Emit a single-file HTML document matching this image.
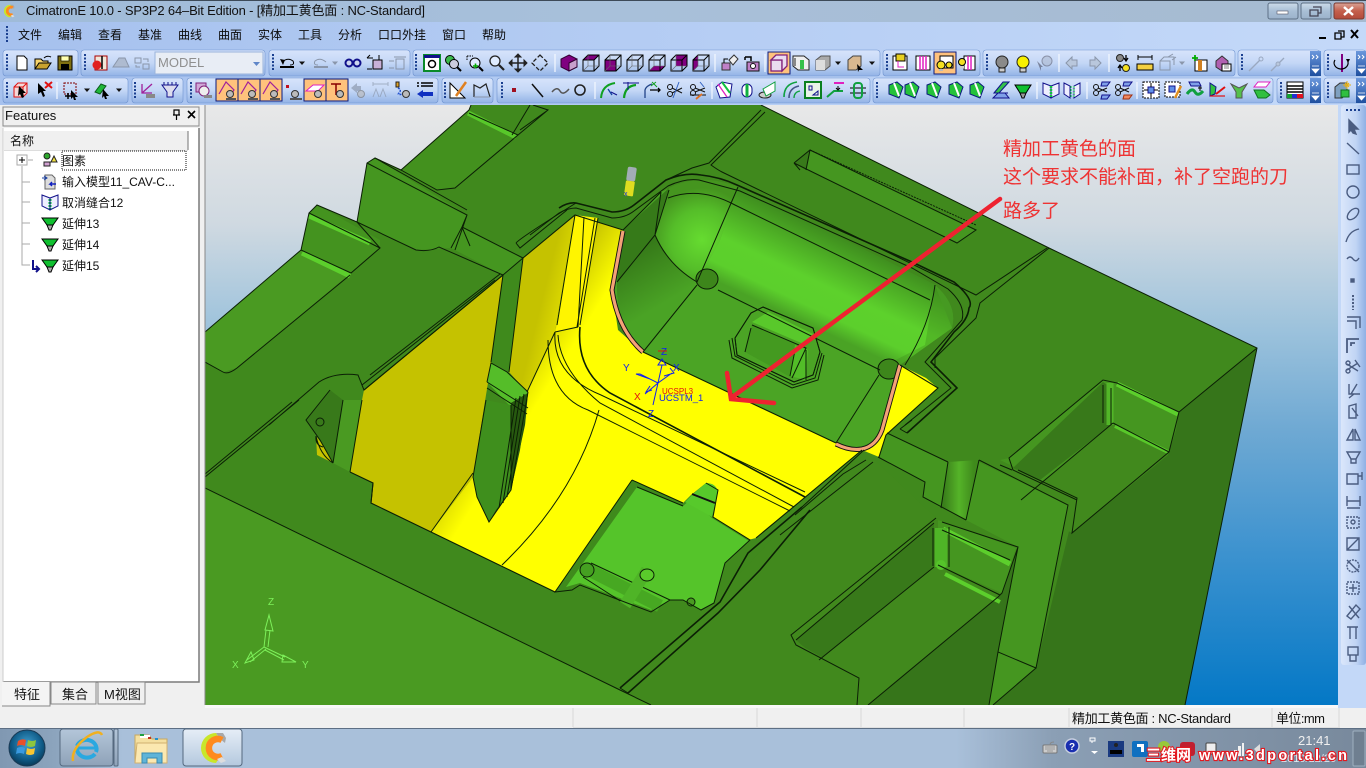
<!DOCTYPE html>
<html lang="zh"><head><meta charset="utf-8"><title>CimatronE 10.0</title>
<style>
html,body{margin:0;padding:0;width:1366px;height:768px;overflow:hidden;background:#f0f0f0}
svg{display:block;position:absolute;left:0;top:0}
text{font-family:"Liberation Sans","Noto Sans CJK SC",sans-serif}
.l{fill:none;stroke:#0b1f05;stroke-width:1}
.t{fill:none;stroke:#0b1f05;stroke-width:1.6}
.w{fill:none;stroke:#000;stroke-width:1}
.rt{fill:none;stroke:#4a5c80;stroke-width:1.4}
</style></head><body>
<svg width="1366" height="768" viewBox="0 0 1366 768" xmlns="http://www.w3.org/2000/svg">
<defs>
<linearGradient id="bg" x1="0" y1="0" x2="0" y2="1"><stop offset="0" stop-color="#e8e8e8"/><stop offset=".2" stop-color="#cfd9e1"/><stop offset=".375" stop-color="#9cc2dc"/><stop offset=".54" stop-color="#6fa9d3"/><stop offset=".75" stop-color="#3c92cf"/><stop offset="1" stop-color="#0478c6"/></linearGradient>
<linearGradient id="title" x1="0" y1="0" x2="1" y2="0"><stop offset="0" stop-color="#9fbbd9"/><stop offset=".45" stop-color="#a8c0da"/><stop offset="1" stop-color="#a6bad0"/></linearGradient>
<linearGradient id="band" x1="0" y1="0" x2="1" y2="0"><stop offset="0" stop-color="#a6c1ee"/><stop offset="1" stop-color="#c4d9f9"/></linearGradient>
<linearGradient id="tb" x1="0" y1="0" x2="0" y2="1"><stop offset="0" stop-color="#d7e4fb"/><stop offset=".5" stop-color="#c4d7f6"/><stop offset="1" stop-color="#93b3e6"/></linearGradient>
<linearGradient id="chev" x1="0" y1="0" x2="0" y2="1"><stop offset="0" stop-color="#6b97dc"/><stop offset="1" stop-color="#1e4f9f"/></linearGradient>
<linearGradient id="rb" x1="0" y1="0" x2="1" y2="0"><stop offset="0" stop-color="#dbe7fb"/><stop offset=".6" stop-color="#c0d4f4"/><stop offset="1" stop-color="#8fb0e4"/></linearGradient>
<linearGradient id="task" x1="0" y1="0" x2="1" y2="0"><stop offset="0" stop-color="#8098b2"/><stop offset=".04" stop-color="#8ca4bd"/><stop offset=".09" stop-color="#a9c0da"/><stop offset=".7" stop-color="#a9c0da"/><stop offset=".77" stop-color="#8b9fb5"/><stop offset="1" stop-color="#78899c"/></linearGradient>
<linearGradient id="btn" x1="0" y1="0" x2="0" y2="1"><stop offset="0" stop-color="#e6eef7"/><stop offset="1" stop-color="#b4c8de"/></linearGradient>
<linearGradient id="cap" x1="0" y1="0" x2="0" y2="1"><stop offset="0" stop-color="#cddbe9"/><stop offset=".5" stop-color="#a9bfd6"/><stop offset="1" stop-color="#9bb2cb"/></linearGradient>
<linearGradient id="btnr" x1="0" y1="0" x2="0" y2="1"><stop offset="0" stop-color="#d9a497"/><stop offset=".5" stop-color="#c45f4c"/><stop offset="1" stop-color="#b34a3a"/></linearGradient>
<linearGradient id="tbtn" x1="0" y1="0" x2="0" y2="1"><stop offset="0" stop-color="#b4c6d9"/><stop offset="1" stop-color="#8ea2b8"/></linearGradient>
<linearGradient id="ybrt" gradientUnits="userSpaceOnUse" x1="440" y1="470" x2="480" y2="495"><stop offset="0" stop-color="#c5c200"/><stop offset="1" stop-color="#ffff00"/></linearGradient>
<linearGradient id="ydk" gradientUnits="userSpaceOnUse" x1="542" y1="300" x2="566" y2="306"><stop offset="0" stop-color="#c5c200"/><stop offset="1" stop-color="#e0dd00"/></linearGradient>
<linearGradient id="bandg" gradientUnits="userSpaceOnUse" x1="775" y1="205" x2="735" y2="290"><stop offset="0" stop-color="#3e8c1e"/><stop offset=".55" stop-color="#5dd12c"/><stop offset=".82" stop-color="#5ccf2c"/><stop offset="1" stop-color="#4aa325"/></linearGradient>
<radialGradient id="spot" gradientUnits="userSpaceOnUse" cx="702" cy="240" r="52"><stop offset="0" stop-color="#66dc30"/><stop offset=".6" stop-color="#55bd29"/><stop offset="1" stop-color="#45951f"/></radialGradient>
<linearGradient id="wallg" gradientUnits="userSpaceOnUse" x1="640" y1="250" x2="670" y2="300"><stop offset="0" stop-color="#367a19"/><stop offset="1" stop-color="#4aa325"/></linearGradient>
<linearGradient id="cyl" gradientUnits="userSpaceOnUse" x1="944" y1="0" x2="974" y2="0"><stop offset="0" stop-color="#3a7f1b"/><stop offset=".5" stop-color="#55b328"/><stop offset="1" stop-color="#3f8a1c"/></linearGradient>
<radialGradient id="orb" cx=".5" cy=".4" r=".6"><stop offset="0" stop-color="#3f9fd0"/><stop offset=".7" stop-color="#0f5a86"/><stop offset="1" stop-color="#0a3a58"/></radialGradient>
<clipPath id="vp"><rect x="205" y="105" width="1133" height="600"/></clipPath>

<!-- toolbar parts -->
<g id="grip" fill="#1a3f8f"><rect x="-1" y="-8" width="2" height="2"/><rect x="-1" y="-4.5" width="2" height="2"/><rect x="-1" y="-1" width="2" height="2"/><rect x="-1" y="2.500" width="2" height="2"/><rect x="-1" y="6" width="2" height="2"/></g>
<path id="dd" d="M-3,-1.500H3L0,2Z" fill="#111"/>
<path id="ddg" d="M-3,-1.500H3L0,2Z" fill="#8a96aa"/>
<rect id="sel" x="-11" y="-11" width="22" height="22" fill="#ffc27c" stroke="#0a1a7e"/>
<g id="wc" fill="none" stroke="#000"><path d="M-8,-3H3V8H-8ZM-8,-3L-3,-8H8V3L3,8M3,-3L8,-8"/><path d="M-8,8L-3,3V-8M-3,3H8" stroke="#666" stroke-width=".6"/></g>
<g id="bulb" stroke="#222"><circle cy="-2" r="6"/><rect x="-3" y="4" width="6" height="4" fill="#ccc"/></g>
<g id="gface"><path d="M-8,-5L0,-8L6,-3L2,8L-8,4Z" fill="#25c23a" stroke="#0a1a7e"/><path d="M-3,-7L2,6" stroke="#fff" stroke-width="2"/></g>
<g id="chv"><rect x="-5" y="-12" width="11" height="25" fill="url(#chev)"/><path d="M-3,-8l2,2l-2,2M1,-8l2,2l-2,2" stroke="#fff" fill="none"/><path d="M-3,3h7M-3,6h7l-3.500,4z" fill="#fff" stroke="#fff" stroke-width=".8"/></g>
<g id="slab"><path d="M-8,4L-1,-8L7,0L3,6" fill="none" stroke="#a0209a" stroke-width="1.200"/><circle cx="3" cy="4" r="3.500" fill="#bbb" stroke="#333"/><path d="M-1,9H9" stroke="#555" stroke-width="2"/></g>
<g id="clogo"><path d="M3,-15A15,15 0 1 0 3,15L6,10A10,10 0 0 1 6,-10Z" fill="#c9e62a"/><path d="M3,-15L10,-15L13,-10L12,-5L7,-9Z" fill="#a8a8a8"/><path d="M9,-8A9,9 0 1 0 9,8" fill="none" stroke="#ff8a1e" stroke-width="6.500"/><path d="M4,11L9,9L13,13L8,15Z" fill="#ddd"/></g>
</defs>

<!-- window chrome -->
<rect width="1366" height="768" fill="#f0f0f0"/>
<rect width="1366" height="22" fill="url(#title)"/>
<rect width="1366" height="1" fill="#3d4a58"/>
<rect y="22" width="1366" height="83" fill="url(#band)"/>
<rect x="1338" y="105" width="28" height="603" fill="#c3d8f8"/>
<use href="#clogo" transform="translate(9,11) scale(.42)"/>
<text x="26" y="15" font-size="13" fill="#111" textLength="399" lengthAdjust="spacing">CimatronE 10.0 - SP3P2 64–Bit Edition - [精加工黄色面 : NC-Standard]</text>
<!-- caption buttons -->
<rect x="1268" y="3" width="30" height="16" rx="2" fill="url(#cap)" stroke="#5d7086"/><rect x="1277" y="11" width="11" height="3" fill="#fff" stroke="#556"  stroke-width=".6"/>
<rect x="1301" y="3" width="30" height="16" rx="2" fill="url(#cap)" stroke="#5d7086"/><path d="M1313,7h8v6h-3M1310,10h8v6h-8z" fill="none" stroke="#445" stroke-width="1.300"/>
<rect x="1334" y="3" width="30" height="16" rx="2" fill="url(#btnr)" stroke="#7a3a30"/><path d="M1344,7l9,8M1353,7l-9,8" stroke="#fff" stroke-width="2.500"/>
<!-- MDI -->
<rect x="1319" y="37" width="7" height="2" fill="#000"/><path d="M1338,31h6v6h-3M1335,33h6v6h-6z" fill="none" stroke="#000" stroke-width="1.300"/><path d="M1351,30l7,8M1358,30l-7,8" stroke="#000" stroke-width="2"/>
<!-- menu -->
<use href="#grip" x="7" y="34"/>
<g font-size="12" fill="#0a0a0a">
<text x="18" y="39">文件</text><text x="58" y="39">编辑</text><text x="98" y="39">查看</text><text x="138" y="39">基准</text><text x="178" y="39">曲线</text><text x="218" y="39">曲面</text><text x="258" y="39">实体</text><text x="298" y="39">工具</text><text x="338" y="39">分析</text><text x="378" y="39">口口外挂</text><text x="442" y="39">窗口</text><text x="482" y="39">帮助</text>
</g>
<!-- toolbar bands row 1 -->
<g fill="url(#tb)" stroke="#6f93cf" stroke-width=".6">
<rect x="3" y="50" width="75" height="26" rx="3"/><rect x="81" y="50" width="184" height="26" rx="3"/><rect x="269" y="50" width="141" height="26" rx="3"/><rect x="413" y="50" width="467" height="26" rx="3"/><rect x="883" y="50" width="97" height="26" rx="3"/><rect x="983" y="50" width="252" height="26" rx="3"/><rect x="1238" y="50" width="82" height="26" rx="3"/><rect x="1324" y="50" width="42" height="26" rx="3"/>
<!-- row 2 -->
<rect x="3" y="78" width="125" height="25" rx="3"/><rect x="132" y="78" width="51" height="25" rx="3"/><rect x="187" y="78" width="251" height="25" rx="3"/><rect x="442" y="78" width="51" height="25" rx="3"/><rect x="497" y="78" width="373" height="25" rx="3"/><rect x="873" y="78" width="400" height="25" rx="3"/><rect x="1277" y="78" width="43" height="25" rx="3"/><rect x="1324" y="78" width="42" height="25" rx="3"/>
</g>
<g>
<use href="#grip" x="7" y="62"/><use href="#grip" x="85" y="62"/><use href="#grip" x="273" y="62"/><use href="#grip" x="416" y="62"/><use href="#grip" x="887" y="62"/><use href="#grip" x="987" y="62"/><use href="#grip" x="1242" y="62"/><use href="#grip" x="1328" y="62"/>
<use href="#grip" x="7" y="90"/><use href="#grip" x="135" y="90"/><use href="#grip" x="191" y="90"/><use href="#grip" x="445" y="90"/><use href="#grip" x="502" y="90"/><use href="#grip" x="877" y="90"/><use href="#grip" x="1281" y="90"/><use href="#grip" x="1328" y="90"/>
<use href="#chv" x="1315" y="63"/><use href="#chv" x="1361" y="63"/><use href="#chv" x="1315" y="90"/><use href="#chv" x="1361" y="90"/>
</g>
<!-- separators -->
<path d="M555,54V72M715,54V72M765,54V72M1059,54V72M1109,54V72M57,82V99M595,82V99M712,82V99M1037,82V99M1087,82V99M1137,82V99" stroke="#f4f8ff" stroke-width="1.200"/>

<!-- ROW 1 ICONS -->
<g transform="translate(22,63)"><path d="M-5,-7H2L5,-4V7H-5Z" fill="#fff" stroke="#000"/></g>
<g transform="translate(43,63)"><path d="M-8,6V-4H-2L0,-2H5V1" fill="#f7d46b" stroke="#000"/><path d="M-8,6L-4,0H8L4,6Z" fill="#c9a22f" stroke="#000"/><path d="M1,-5Q4,-8 8,-6" stroke="#000" fill="none"/></g>
<g transform="translate(65,63)"><rect x="-7" y="-7" width="14" height="14" fill="#807010" stroke="#000"/><rect x="-4" y="-7" width="8" height="5" fill="#ffffb0" stroke="#000" stroke-width=".6"/><rect x="-4" y="1" width="8" height="6" fill="#000"/></g>
<g transform="translate(100,63)"><rect x="-5" y="-7" width="12" height="14" fill="#f2e6d8" stroke="#a00" /><circle cx="-3" cy="2" r="4.500" fill="#e02020"/><path d="M2,-7V6" stroke="#000" stroke-width="1.500"/></g>
<g transform="translate(121,63)"><path d="M-8,4L-2,-5H4L8,4Z" fill="#aebbd0" stroke="#8a96aa"/></g>
<g transform="translate(142,63)" fill="none" stroke="#8a96aa"><rect x="-7" y="-5" width="6" height="5"/><rect x="1" y="1" width="6" height="5"/><path d="M1,-4H6V-1M-2,4H-6V2"/></g>
<rect x="155" y="52" width="108" height="22" fill="#e8edf5" stroke="#9ab4dc"/><text x="158" y="67" font-size="13" fill="#8f8f8f">MODEL</text><path d="M253,62h7l-3.500,4z" fill="#5f86c8"/>
<g transform="translate(288,63)"><path d="M-8,4H6" stroke="#000" stroke-width="2"/><path d="M-6,-1Q0,-6 5,-2Q7,2 2,2" fill="none" stroke="#000"/><path d="M-8,-4L-5,2L-3,-3Z" fill="#000"/></g><use href="#dd" x="302" y="63"/>
<g transform="translate(320,63)"><path d="M-6,4H8" stroke="#8a96aa" stroke-width="2"/><path d="M6,-1Q0,-6 -5,-2Q-7,2 -2,2" fill="none" stroke="#8a96aa"/></g><use href="#ddg" x="335" y="63"/>
<g transform="translate(353,63)" stroke="#10108a" fill="#cdd6ee"><circle cx="-4" r="3.500" stroke-width="2"/><circle cx="4" r="3.500" stroke-width="2"/></g>
<g transform="translate(375,63)"><path d="M-8,-5H-2M-8,-5L-5,-8M4,-8V-3M1,-3H7" stroke="#000" fill="none"/><rect x="-2" y="-3" width="9" height="9" fill="#c8b0d8" stroke="#000"/><path d="M-8,6H-3" stroke="#000"/></g>
<g transform="translate(397,63)" stroke="#8a96aa" fill="none"><rect x="-1" y="-4" width="8" height="10"/><path d="M-3,-6H9M-8,-2H-3M-8,5H-3"/></g>
<g transform="translate(432,63)"><rect x="-8" y="-8" width="16" height="16" fill="#fff" stroke="#0a8a2a" stroke-width="2"/><rect x="-8" y="-8" width="16" height="3" fill="#10108a"/><circle cy="1" r="3.500" fill="none" stroke="#000" stroke-width="1.500"/></g>
<g transform="translate(453,63)"><circle cx="-3" cy="-3" r="4.500" fill="#3aba4a" stroke="#000"/><circle cx="1" cy="1" r="4.500" fill="#ccd" stroke="#000"/><path d="M4,4L8,8" stroke="#000" stroke-width="2"/></g>
<g transform="translate(475,63)"><circle cx="0" cy="0" r="5" fill="#e0ecff" stroke="#000"/><path d="M4,4L8,8" stroke="#000" stroke-width="2"/><path d="M-8,-7H-2M-8,-7V-2" stroke="#000" stroke-dasharray="1.500 1" fill="none"/><path d="M-2,3h5M.5,.5v5" stroke="#0a0" stroke-width="1.600"/></g>
<g transform="translate(497,63)"><circle cx="-2" cy="-2" r="5" fill="#e0ecff" stroke="#222" stroke-width="1.300"/><path d="M2,2L7,7" stroke="#222" stroke-width="2.200"/></g>
<g transform="translate(518,63)" stroke="#222" fill="#222"><path d="M0,-8V8M-8,0H8" stroke-width="1.500"/><path d="M0,-9l-3,3h6zM0,9l-3,-3h6zM-9,0l3,-3v6zM9,0l-3,-3v6z"/></g>
<g transform="translate(540,63)" stroke="#222" fill="none"><path d="M0,-8l4,4l4,4l-4,4l-4,4l-4,-4l-4,-4l4,-4z" stroke-width="1.300" stroke-dasharray="4 2"/></g>
<g transform="translate(569,63)"><path d="M0,-8L8,-4V4L0,8L-8,4V-4Z" fill="#800080" stroke="#300030"/><path d="M0,0L8,-4V4L0,8Z" fill="#c8a0cc" stroke="#300030"/></g>
<g transform="translate(591,63)"><path d="M-8,-3L-3,-8H8L3,-3Z" fill="#800080"/><use href="#wc"/></g>
<g transform="translate(613,63)"><rect x="-8" y="-3" width="11" height="11" fill="#800080"/><use href="#wc"/></g>
<g transform="translate(635,63)"><use href="#wc"/></g>
<g transform="translate(657,63)"><path d="M-8,8L-3,3H8L3,8Z" fill="#800080"/><use href="#wc"/></g>
<g transform="translate(679,63)"><path d="M-3,-8H8V3H-3Z" fill="#800080"/><use href="#wc"/></g>
<g transform="translate(701,63)"><path d="M-8,-3L-3,-8V3L-8,8Z" fill="#800080"/><use href="#wc"/></g>
<g transform="translate(729,63)"><rect x="-7" y="0" width="8" height="7" fill="#c080c8" stroke="#333"/><path d="M0,-3L5,-8L9,-4L4,2Z" fill="#eee" stroke="#333"/><path d="M-5,0V-4H-1" fill="none" stroke="#000"/></g>
<g transform="translate(752,63)"><rect x="-5" y="-1" width="12" height="9" fill="#c080c8" stroke="#111"/><circle cx="1" cy="3" r="2.500" fill="#fff" stroke="#111"/><path d="M-7,-6H-1V-2M-7,-6V-3" fill="none" stroke="#000" stroke-width="1.500"/></g>
<use href="#sel" x="779" y="63"/><g transform="translate(779,63)"><rect x="-8" y="-3" width="11" height="11" fill="#eadcf0" stroke="#80207a" stroke-width="1.300"/><path d="M-8,-3L-3,-8H8V3L3,8V-3Z" fill="#eadcf0" stroke="#80207a" stroke-width="1.300"/></g>
<g transform="translate(801,63)"><path d="M-8,-7H3L8,-3V7H-3L-8,3Z" fill="#eee" stroke="#222"/><path d="M-1,-3h4V6h-4z" fill="#35c04a"/><path d="M-6,-5V3" stroke="#222"/></g>
<g transform="translate(823,63)"><path d="M-7,-3L-2,-7H7V3L2,7H-7Z" fill="#aaa" stroke="#555"/><rect x="-7" y="-3" width="9" height="10" fill="#ddd"/></g><use href="#dd" x="838" y="63"/>
<g transform="translate(855,63)"><path d="M-7,-3L-2,-7H6V3L1,7H-7Z" fill="#d8b890" stroke="#444"/><path d="M2,1L8,7L4,7L3,9Z" fill="#000"/></g><use href="#dd" x="872" y="63"/>
<g transform="translate(901,63)"><rect x="-8" y="-7" width="14" height="14" fill="#fff" stroke="#000"/><rect x="-5" y="-9" width="9" height="7" fill="#e8d020" stroke="#000"/><path d="M-3,-2V4H3" stroke="#e020c0" fill="none"/></g>
<g transform="translate(923,63)"><rect x="-7" y="-7" width="14" height="14" fill="#fff" stroke="#000"/><path d="M-3,-7V7M0,-7V7M3,-7V7" stroke="#e020c0" stroke-width="1.500"/></g>
<use href="#sel" x="945" y="63"/><g transform="translate(945,63)"><rect x="-5" y="-7" width="13" height="12" fill="#fff" stroke="#000"/><circle cx="-4" cy="2" r="4" fill="#f4e020" stroke="#000"/><rect x="-6" y="6" width="4" height="2" fill="#bbb"/><circle cx="4" cy="2" r="3" fill="#f4e020" stroke="#000"/></g>
<g transform="translate(967,63)"><rect x="-3" y="-7" width="11" height="14" fill="#fff" stroke="#000"/><path d="M1,-7V7M4,-7V7" stroke="#e020c0" stroke-width="1.500"/><circle cx="-5" cy="-1" r="3.500" fill="#f4e020" stroke="#000"/><rect x="-7" y="3" width="4" height="2.500" fill="#ccc"/></g>
<use href="#bulb" x="1002" y="64" fill="#8a8a8a"/><use href="#bulb" x="1023" y="64" fill="#f8f000"/>
<g transform="translate(1045,64)" opacity=".55"><circle cx="2" cy="-3" r="5" fill="#aab6cc" stroke="#556"/><path d="M-8,-3L-2,3L-4,3L-4,7Z" fill="#445"/></g>
<path d="M1066,63l6,-6v3h5v6h-5v3zM1101,63l-6,-6v3h-5v6h5v3z" fill="#b9c7dc" stroke="#8a96aa"/>
<g transform="translate(1123,63)"><circle cx="-3" cy="-5" r="3.500" fill="#888" stroke="#222"/><circle cx="3" cy="5" r="3.500" fill="#f4e020" stroke="#222"/><path d="M3,-8v5m-2,-2l2,3l2,-3M-3,8v-5m-2,2l2,-3l2,3" stroke="#000" fill="none" stroke-width="1.300"/></g>
<g transform="translate(1145,63)"><path d="M-7,-6H7M-7,-8V-3M7,-8V-3" stroke="#000" fill="none"/><path d="M-4,-6l-3,0M4,-6l3,0" stroke="#000"/><rect x="-8" y="1" width="16" height="6" fill="#f4d040" stroke="#000"/></g>
<g transform="translate(1167,63)" stroke="#8a96aa" fill="none"><rect x="-7" y="-2" width="10" height="9"/><path d="M-7,-2l4,-4h10v8M1,-6l5,-3M5,-3l4,-3"/></g><use href="#ddg" x="1182" y="63"/>
<g transform="translate(1199,63)"><rect x="-4" y="-3" width="12" height="11" fill="#fff" stroke="#000"/><rect x="-1" y="-3" width="4" height="11" fill="#d08020"/><path d="M-7,-5h6M-4,-8v6" stroke="#0a0" stroke-width="1.800"/></g>
<g transform="translate(1222,63)"><path d="M-6,-2L0,-7L6,-2V4L0,8L-6,4Z" fill="#b060b0" stroke="#333"/><rect x="0" y="1" width="9" height="7" fill="#fff" stroke="#000"/><path d="M2,3h5M2,5h5" stroke="#000" stroke-width=".6"/></g>
<path d="M1249,71L1260,60" stroke="#9aa8c0" stroke-width="1.300"/><circle cx="1261" cy="59" r="2" fill="none" stroke="#9aa8c0"/><path d="M1271,71L1284,58" stroke="#9aa8c0" stroke-width="1.300"/><circle cx="1278" cy="64" r="2" fill="#b9c7dc" stroke="#9aa8c0"/>
<g transform="translate(1342,63)"><path d="M0,-9V9" stroke="#800080" stroke-width="2"/><path d="M-7,-3A7,6 0 1 0 6,-1" fill="none" stroke="#000" stroke-width="1.200"/><path d="M4,-4l4,0l-2,4z" fill="#000"/></g>

<!-- ROW 2 ICONS -->
<g transform="translate(21,90)"><path d="M-7,-3L-3,-7H6V3L2,7H-7Z" fill="#f4d8d8" stroke="#e01010"/><path d="M-7,-3H2V7M2,-3L6,-7" stroke="#e01010" fill="none"/><path d="M-2,-4L5,3H2L3,7L1,8L-1,4L-3,6Z" fill="#000"/></g>
<g transform="translate(44,90)"><path d="M-6,-7L2,1H-1L1,6L-1,7L-3,2L-6,4Z" fill="#000"/><path d="M1,-8L8,-2M8,-8L1,-2" stroke="#e01010" stroke-width="2"/></g>
<g transform="translate(72,90)"><rect x="-8" y="-7" width="12" height="11" fill="none" stroke="#800000" stroke-dasharray="2 1"/><path d="M-1,0L6,7H3L4,10L2,10L1,7L-1,9Z" fill="#000"/><path d="M-7,6h6M-4,3v6" stroke="#000" stroke-width="1.500"/></g><use href="#dd" x="87" y="90"/>
<g transform="translate(103,90)"><path d="M-8,2L-2,-6L3,-4L-3,4Z" fill="#1fb83a" stroke="#0a5a1a"/><path d="M0,-1L6,6H3L4,9L2,9L1,6L-1,8Z" fill="#000"/></g><use href="#dd" x="119" y="90"/>
<g transform="translate(148,90)"><path d="M-6,-6V3H4M-6,3L4,-6" stroke="#a0209a" fill="none" stroke-width="1.300"/><rect x="-2" y="4" width="9" height="4" fill="#888"/></g>
<g transform="translate(170,90)"><path d="M-8,-5H8L3,2V7H-3V2Z" fill="#dde" stroke="#10108a"/><path d="M-6,-8V-5M-2,-8V-5M2,-8V-5M6,-8V-5" stroke="#10108a"/></g>
<g transform="translate(203,90)"><rect x="-7" y="-7" width="10" height="9" fill="#d0a8d8" stroke="#80207a"/><circle cx="1" cy="1" r="5" fill="#eee" stroke="#80207a"/><rect x="1" y="5" width="8" height="3" fill="#888"/></g>
<use href="#sel" x="227" y="90"/><use href="#slab" x="227" y="90"/>
<use href="#sel" x="249" y="90"/><use href="#slab" x="249" y="90"/>
<use href="#sel" x="271" y="90"/><use href="#slab" x="271" y="90"/>
<g transform="translate(293,90)"><rect x="-7" y="-5" width="3" height="3" fill="#c01020"/><circle cx="2" cy="4" r="3.500" fill="#bbb" stroke="#333"/><path d="M-3,9H9" stroke="#555" stroke-width="2"/></g>
<use href="#sel" x="315" y="90"/><g transform="translate(315,90)"><path d="M-9,1L-2,-5H9L3,1Z" fill="#fff" stroke="#e020c0"/><circle cx="3" cy="4" r="3.500" fill="#bbb" stroke="#333"/></g>
<use href="#sel" x="337" y="90"/><g transform="translate(337,90)"><path d="M-6,-6H4M-1,-6V5" stroke="#800" stroke-width="1.500"/><circle cx="3" cy="4" r="3.500" fill="#bbb" stroke="#333"/></g>
<g transform="translate(358,90)" opacity=".65"><path d="M-7,-2L-1,-7V-4H3V1H-1V3Z" fill="#8a96aa"/><circle cx="3" cy="4" r="3.500" fill="#bbb" stroke="#777"/></g>
<g transform="translate(381,90)" opacity=".65"><path d="M-8,-6H7M-8,-8V-4M7,-8V-4" stroke="#8a96aa"/><path d="M-8,7L-5,-1L-2,7M-1,7L2,-1L5,7" fill="none" stroke="#8a96aa"/></g>
<g transform="translate(403,90)"><path d="M-7,-8h3v5h-3z" fill="#e0a020" stroke="#222"/><path d="M-5,-2Q-1,0 -4,3T3,3" stroke="#2050d0" fill="none" stroke-width="1.500" stroke-dasharray="2 1"/><circle cx="3" cy="4" r="3.500" fill="#bbb" stroke="#333"/></g>
<g transform="translate(425,90)"><path d="M-4,-7H8M-4,-4H8M-8,-7H-6M-8,-4H-6" stroke="#000" stroke-width="1.500"/><path d="M-8,4L-2,0V2H8V6H-2V8Z" fill="#1030c0"/></g>
<g transform="translate(458,90)"><path d="M-8,8V-7L7,8Z" fill="#fff" stroke="#000"/><path d="M-2,6L8,-8" stroke="#e08020" stroke-width="2.500"/></g>
<path d="M474,97V85L480,88L486,84L490,97" fill="none" stroke="#222" stroke-width="1.200"/><path d="M474,97H490" stroke="#8a96aa"/>
<rect x="512" y="88" width="4" height="4" fill="#a01020"/>
<path d="M532,84L543,97" stroke="#111" stroke-width="1.500"/><path d="M552,92Q557,86 560,91T569,89" stroke="#555" fill="none" stroke-width="1.500"/><circle cx="580" cy="90" r="5" fill="none" stroke="#222" stroke-width="1.600"/>
<g transform="translate(609,90)"><path d="M-8,8Q-7,-5 6,-7" stroke="#10a020" fill="none" stroke-width="2"/><path d="M-1,-1L3,5" stroke="#1040a0" stroke-width="1.300"/><path d="M2,2L8,5" stroke="#10108a"/></g>
<g transform="translate(631,90)"><path d="M-7,8Q-6,-4 5,-5" stroke="#10a020" fill="none" stroke-width="2.200"/><path d="M-8,-7H8M-3,-8V0" stroke="#10108a"/></g>
<g transform="translate(653,90)"><path d="M-8,8V0Q-7,-4 -1,-6" stroke="#224488" fill="none" stroke-width="1.300"/><path d="M-3,0H7M5,-2l2,2l-2,2" stroke="#000" fill="none" stroke-width="1.300"/><path d="M-1,-8L4,-3M-2,-4L3,-8" stroke="#10a020"/></g>
<g transform="translate(675,90)" stroke="#111" fill="none"><circle cx="-5" cy="-3" r="2.500"/><circle cx="-5" cy="4" r="2.500"/><path d="M-3,-2L7,3M-3,3L7,-2"/><path d="M4,-8L-2,8" stroke="#3060c0" stroke-width="1"/></g>
<g transform="translate(698,90)" stroke="#111" fill="none"><circle cx="-5" cy="-3" r="2.500"/><circle cx="-5" cy="3" r="2.500"/><path d="M-3,-2L7,2M-3,2L7,-2M-8,5H8"/><path d="M-2,9L4,4" stroke="#e07020" stroke-width="1.800"/><path d="M2,-8L6,-3" stroke="#3060c0"/></g>
<g transform="translate(724,90)"><path d="M-8,-3L-2,-8L8,-6L6,7L-4,8Z" fill="#fff" stroke="#10108a"/><path d="M-6,-6L3,7" stroke="#e020c0" stroke-width="1.300"/><path d="M-2,-8L6,3" stroke="#10c040" stroke-width="2"/></g>
<g transform="translate(747,90)"><rect x="-5" y="-6" width="10" height="13" rx="5" fill="#fff" stroke="#10108a"/><path d="M0,-6V7" stroke="#10b040" stroke-width="3"/></g>
<g transform="translate(768,90)"><ellipse cx="-3" cy="5" rx="6" ry="3" fill="#ccc" stroke="#222"/><path d="M-5,-1L7,-8V1L-2,6Z" fill="#fff" stroke="#10a040"/></g>
<g transform="translate(792,90)" fill="none"><path d="M-8,7Q-8,-6 5,-8" stroke="#10a040" stroke-width="1.600"/><path d="M-3,8Q-3,-2 7,-4" stroke="#445588" stroke-width="1.600"/><path d="M2,8Q2,2 8,1" stroke="#10a040" stroke-width="1.300"/></g>
<g transform="translate(813,90)"><rect x="-8" y="-8" width="16" height="16" fill="#e8f4e8" stroke="#0a8020" stroke-width="2"/><rect x="-4" y="-4" width="3" height="4" fill="none" stroke="#10108a"/><path d="M0,5H5V1Z" fill="none" stroke="#10108a"/></g>
<g transform="translate(835,90)"><path d="M-1,-7H9" stroke="#e020c0" stroke-width="2"/><path d="M-8,7L-1,1H8" stroke="#10a040" stroke-width="2" fill="none"/><path d="M3,-4V-1m-2,-1l2,2l2,-2" stroke="#000" fill="none"/></g>
<g transform="translate(858,90)"><path d="M-8,-2H8M-8,3H8" stroke="#000"/><rect x="-4" y="-7" width="8" height="15" rx="3" fill="none" stroke="#10a040" stroke-width="2"/></g>
<g><use href="#gface" x="897" y="90"/><use href="#gface" x="913" y="90"/><use href="#gface" x="935" y="90"/><use href="#gface" x="957" y="90"/><use href="#gface" x="978" y="90"/></g>
<g transform="translate(1001,90)"><path d="M-7,3L2,-8H8L-2,3ZM-7,3H7" stroke="#10108a" fill="#35c04a"/><path d="M-8,8H8L4,3H-3Z" fill="#7fa0e8" stroke="#10108a"/></g>
<g transform="translate(1023,90)"><path d="M-8,-5H8L3,3H-3Z" fill="#10c030" stroke="#000"/><path d="M-3,3H3L1,8H-1Z" fill="#999" stroke="#000"/></g>
<g transform="translate(1051,90)"><path d="M-8,-7L0,-4V8L-8,4ZM8,-7L0,-4V8L8,4Z" fill="#eef" stroke="#10108a"/><path d="M0,-4V8" stroke="#10c040" stroke-width="2.500" stroke-dasharray="2 1"/></g>
<g transform="translate(1072,90)"><path d="M-8,-7L-2,-4V8L-8,4ZM8,-7L2,-4V8L8,4Z" fill="#eef" stroke="#10108a"/><path d="M-1,-4V8M2,-4V8" stroke="#10c040" stroke-dasharray="2 1"/></g>
<g transform="translate(1101,90)" stroke="#111" fill="none"><circle cx="-5" cy="-3" r="2.500"/><circle cx="-5" cy="3" r="2.500"/><path d="M-3,-2L6,2M-3,2L6,-2"/><path d="M1,-8H9L6,-4H0ZM1,5H9L6,9H0Z" fill="#7fa0e8" stroke="#10108a"/></g>
<g transform="translate(1123,90)" stroke="#111" fill="none"><circle cx="-5" cy="-3" r="2.500"/><circle cx="-5" cy="3" r="2.500"/><path d="M-3,-2L6,2M-3,2L6,-2"/><path d="M1,-8H9L6,-4H0Z" fill="#7fa0e8" stroke="#10108a"/><path d="M1,5H9L6,9H0Z" fill="#f08860" stroke="#a03010"/></g>
<g transform="translate(1151,90)"><rect x="-8" y="-8" width="16" height="16" fill="#fff" stroke="#000" stroke-dasharray="2 1"/><rect x="-3" y="-3" width="6" height="6" fill="#6090e8" stroke="#10108a"/><path d="M0,-7V-3M0,3V7M-7,0H-3M3,0H7" stroke="#000"/></g>
<g transform="translate(1173,90)"><rect x="-8" y="-8" width="15" height="15" fill="#fff" stroke="#000" stroke-dasharray="2 1"/><rect x="-4" y="-4" width="6" height="6" fill="#6090e8" stroke="#10108a"/><path d="M2,8L8,-4" stroke="#e09020" stroke-width="2.500"/></g>
<g transform="translate(1195,90)"><path d="M-6,-8H4L6,-4H-4Z" fill="#7fa0e8" stroke="#10108a"/><path d="M-8,4Q-3,-3 0,2T8,1" stroke="#10a040" fill="none" stroke-width="3"/><path d="M5,-4v5M3,-2h4" stroke="#000"/></g>
<g transform="translate(1217,90)"><path d="M-7,-7L-1,-3L-2,4L-7,6Z" fill="#30c040" stroke="#10108a"/><path d="M-1,4L8,-3" stroke="#e01010" stroke-width="2"/><path d="M-7,6L8,6" stroke="#e01010" stroke-width="1.200"/></g>
<g transform="translate(1239,90)"><path d="M-8,-6L0,-2L8,-6L3,2L3,8H-3V2Z" fill="#55c04a" stroke="#555"/></g>
<g transform="translate(1262,90)"><path d="M-4,-8H8L4,-3H-8Z" fill="#fff" stroke="#e020c0"/><path d="M-8,0H2L8,5L4,8H-4Z" fill="#30c040" stroke="#107020"/></g>
<g transform="translate(1295,90)"><rect x="-8" y="-8" width="16" height="16" fill="#fff" stroke="#000"/><path d="M-8,-4H8M-8,-1H8M-8,2H8" stroke="#000" stroke-width="1.500"/><rect x="-8" y="4" width="5" height="4" fill="#10a030"/><rect x="-3" y="4" width="5" height="4" fill="#2030d0"/><rect x="2" y="4" width="6" height="4" fill="#e01020"/></g>
<g transform="translate(1342,90)"><path d="M-7,-3L-2,-7H5V4L0,8H-7Z" fill="#7fa0c0" stroke="#333"/><rect x="-1" y="0" width="8" height="7" fill="#30c040" stroke="#107020"/><path d="M3,-7l4,4M7,-7l-4,4M1,-5h8M5,-9v8" stroke="#e8b010"/></g>

<!-- right toolbar -->
<rect x="1341" y="105" width="25" height="560" rx="3" fill="url(#rb)"/>
<path d="M1346,110h2M1350,110h2M1354,110h2M1358,110h2" stroke="#1a3f8f" stroke-width="2"/>
<g class="rt">
<path d="M1349,120L1358,129H1354L1356,134L1353,133L1351,130L1349,132Z" fill="#4a5c80"/>
<path d="M1347,143L1359,154"/>
<rect x="1347" y="165" width="12" height="9"/>
<circle cx="1353" cy="192" r="6"/>
<ellipse cx="1353" cy="214" rx="7" ry="4" transform="rotate(-45 1353 214)"/>
<path d="M1346,242Q1349,231 1359,229"/>
<path d="M1347,259Q1350,255 1353,259T1359,258"/>
<rect x="1351" y="279" width="3" height="3" fill="#4a5c80"/>
<path d="M1353,295V310" stroke-dasharray="2 1.500" stroke-width="2"/>
<path d="M1347,317H1360V328M1347,321H1356V329"/>
<path d="M1347,353V339H1359M1351,346V343H1355" stroke-width="1.800"/>
<path d="M1347,364L1358,371M1347,370L1358,363M1355,360L1360,367"/><circle cx="1348" cy="363" r="2"/><circle cx="1348" cy="371" r="2"/>
<path d="M1349,384V394H1360M1357,384L1351,394M1349,398L1354,394"/>
<path d="M1349,418V406L1356,404V418ZM1352,408L1358,416" /><path d="M1353,429L1347,440H1353ZM1355,429L1360,440H1355Z"/>
<path d="M1347,452H1360L1356,459H1351ZM1351,459V463H1356V459"/>
<path d="M1347,474H1358V484H1347ZM1358,476H1362M1362,472V480"/>
<path d="M1347,496V506M1360,496V506M1347,501H1360M1347,508H1360"/>
<rect x="1347" y="517" width="12" height="11" stroke-dasharray="2 1"/><circle cx="1353" cy="522" r="2" />
<path d="M1347,538H1359V550H1347ZM1347,550L1359,538"/><circle cx="1353" cy="566" r="6" stroke-dasharray="2 1"/><path d="M1347,560L1359,572"/>
<rect x="1347" y="582" width="12" height="12" stroke-dasharray="2 1"/><path d="M1353,584V592M1349,588H1357"/>
<path d="M1347,616L1356,605L1360,609L1351,619ZM1349,606L1359,618"/>
<path d="M1347,627H1358M1350,627V639M1356,627V639"/>
<rect x="1348" y="647" width="10" height="8"/><path d="M1350,655V661H1356V655"/>
</g>

<!-- VIEWPORT -->
<g clip-path="url(#vp)">
<rect x="205" y="105" width="1133" height="600" fill="url(#bg)"/>
<polygon points="205,332 301,250 309,213 317,205 357,222 367,163 375,158 401,170 469,110 471,105 761,105 1049,248 1257,348 1185,705 205,705" fill="#40891d"/>
<!-- dark right side -->
<polygon points="1257,348 1185,705 990,705 1036,668 1077,498 1072,533 1168,455 1176,430 1179,412" fill="#36751a"/>
<!-- upper right pocket -->
<polygon points="1103,380 1117,383 1179,412 1169,452 1072,533 1077,498 1000,460 1009,458" fill="#459620"/>
<polygon points="1103,382 1111,388 1111,425 1040,480 1018,470 1013,468" fill="#38791a"/>
<polygon points="1113,423 1169,452 1072,533 1017,503" fill="#41891d"/>
<path d="M1117,384L1178,414" stroke="#5ccf2c" stroke-width="5"/><path d="M1115,426L1168,452" stroke="#58c82a" stroke-width="4"/><path d="M1110,383V425" stroke="#52b628" stroke-width="7"/>
<!-- lower pocket -->
<polygon points="936,518 1018,547 1002,593 998,597 868,705 857,705 859,678 819,660 796,640 791,635" fill="#41891d"/>
<polygon points="934,523 796,640 819,660 934,567" fill="#38791a"/>
<polygon points="938,520 1016,548 1002,593 938,565" fill="#459620"/>
<polygon points="1018,547 998,652 989,705 868,705 998,597 1002,593" fill="#36751a"/>
<path d="M943,529L1010,564" stroke="#5ccf2c" stroke-width="5"/><path d="M945,574L1000,602" stroke="#5ccf2c" stroke-width="4"/><path d="M941,528V567" stroke="#4fb427" stroke-width="12"/>
<circle cx="941" cy="565" r="5" fill="#55c42a"/>
<!-- column and cylinder -->
<polygon points="979,462 1068,505 1036,668 998,652 1018,547 966,520" fill="#459620"/>
<polygon points="998,652 1036,668 993,705 989,705" fill="#459620"/>
<polygon points="887,433 948,462 941,508 923,497 925,482 878,457" fill="#459620"/>
<polygon points="948,462 979,460 966,520 941,508" fill="url(#cyl)"/>
<!-- plates upper left -->
<polygon points="205,332 301,250 351,273 237,368 223,372 205,362" fill="#4a9a22"/>
<polygon points="301,250 309,213 317,205 380,240 380,248 351,273" fill="#44931f"/>
<path d="M309,216L370,243" stroke="#5ccf2c" stroke-width="5"/><path d="M302,253L350,276" stroke="#5ccf2c" stroke-width="5"/>
<polygon points="367,163 375,158 467,215 462,227 451,248 416,250 357,222" fill="#459620"/>
<polygon points="462,227 523,258 503,275 451,248" fill="#459620"/>
<polygon points="401,170 469,110 518,135 455,188 437,190" fill="#43911e"/>
<path d="M468,113L516,137" stroke="#58c82a" stroke-width="5"/>
<!-- lower light plate -->
<polygon points="205,488 620,690 651,705 205,705" fill="#4a9a22"/>
<polygon points="628,693 651,705 857,705 859,678 791,640 936,518 864,450 802,507" fill="#41891d"/>
<!-- yellow -->
<polygon points="575,215 623,230 612,290 618,330 643,352 836,443 862,450 756,538 748,540 632,480 555,592 431,532 473,477 527,392 555,332" fill="url(#ybrt)"/>
<polygon points="900,365 926,378 938,388 886,435 879,457 862,450 881,433" fill="#ffff00"/>
<polygon points="503,275 364,390 362,400 350,472 373,483 371,503 431,532 473,477 486,395 491,365" fill="#c5c200"/>
<polygon points="523,258 575,215 555,332 527,392 509,372" fill="url(#ydk)"/>
<polygon points="575,215 598,218 580,325 555,332 557,325" fill="#fff500"/>
<polygon points="316,436 323,445 333,463 317,455" fill="#c5c200"/>
<!-- green column -->
<polygon points="503,275 523,258 509,372 491,362" fill="#3f8a1c"/>
<polygon points="343,400 362,400 350,472 333,463" fill="#4a9a22"/>
<polygon points="330,390 343,400 333,463 320,440 306,420" fill="#38791a"/>
<!-- bowl -->
<path d="M623,230L661,192Q700,172 738,187L935,285Q958,305 952,328L900,365L881,433Q870,448 862,450Q850,450 836,443L643,352Q618,330 612,290Z" fill="#4ba425"/>
<polygon points="623,230 669,188 655,235 617,282" fill="#367a19"/>
<path d="M617,282L655,235Q668,265 697,282L643,352Q615,325 617,282Z" fill="url(#wallg)"/>
<path d="M669,188Q700,172 738,187L720,240L697,282Q668,265 655,235Z" fill="url(#spot)"/>
<polygon points="738,187 935,285 952,328 900,365 881,368 709,288 697,282 720,240" fill="url(#bandg)"/>
<path d="M935,285Q958,305 952,328L900,365L880,368L925,345Z" fill="#3f8a1c" opacity=".35"/>
<ellipse cx="707" cy="279" rx="11" ry="10" fill="#3d861b" stroke="#0b1f05"/>
<ellipse cx="889" cy="369" rx="11" ry="10" fill="#3d861b" stroke="#0b1f05"/>
<!-- boss -->
<path d="M763,307L813,328L820,352L813,375L794,382L737,355L735,338L751,313Z" fill="#4ba425" stroke="#0b1f05"/>
<path d="M768,312L813,334L806,345L752,322Z" fill="#59c82b"/>
<polygon points="752,325 806,348 792,378 745,352" fill="#449a20"/>
<polygon points="795,345 808,350 806,380 790,376" fill="#52bd28"/>
<!-- pad -->
<polygon points="632,480 683,503 691,495 706,483 718,490 713,517 750,540 725,563 714,603 701,610 683,600 670,600 651,612 580,585 572,590 555,592" fill="#3f8a1c"/>
<polygon points="637,487 683,506 691,499 712,518 749,541 725,563 714,603 701,610 683,600 670,600 651,610 580,583 566,587" fill="#55c42a"/>
<path d="M693,494L706,483Q716,483 718,492L712,517L685,502Z" fill="#57c92b"/>
<path d="M692,494L715,503" stroke="#111" stroke-width="2"/>
<path d="M587,569L660,606" stroke="#47a822" stroke-width="13"/><path d="M591,563L670,600M583,577L625,604" stroke="#0b1f05" fill="none"/>
<ellipse cx="587" cy="570" rx="7" ry="7" fill="#45a021" stroke="#0b1f05"/>
<path d="M647,570L625,605" stroke="#4fb427" stroke-width="12"/><ellipse cx="647" cy="575" rx="7" ry="6" fill="#5acb2b" stroke="#0b1f05"/>
<circle cx="691" cy="602" r="4" fill="#4a9a22" stroke="#0b1f05"/>
<!-- blade -->
<polygon points="487,382 491,363 507,372 528,392 525,425 511,407" fill="#55bd29"/>
<polygon points="486,400 511,405 511,490 489,522 477,497 473,477" fill="#3f8f1d"/>
<polygon points="511,403 528,393 525,425 511,490 496,510 489,522 511,490" fill="#1f4d10"/>
<polygon points="511,403 528,393 520,450 511,490" fill="#27590f"/>
<path d="M486,400L473,477L477,497L489,522L511,490L511,405M487,382L491,363L507,372L528,392M528,392L511,490M520,396L503,503M524,394L507,497M516,398L499,508M487,382L528,408M487,388L527,414" class="l"/>
<!-- salmon -->
<path d="M623,231L612,290Q618,330 643,352M836,444Q850,451 862,449Q876,446 882,430L900,365" fill="none" stroke="#111" stroke-width="5"/>
<path d="M623,231L612,290Q618,330 643,352M836,444Q850,451 862,449Q876,446 882,430L900,365" fill="none" stroke="#f4a278" stroke-width="3.200"/>
<!-- slot top right -->
<polygon points="794,163 810,150 976,230 957,243" fill="#459620"/>
<polygon points="794,163 810,150 806,170" fill="#38791a"/>
<!-- tool -->
<rect x="627" y="167" width="9" height="14" rx="2" fill="#a2adb5" transform="rotate(8 631 174)"/>
<rect x="625" y="181" width="9" height="15" rx="1" fill="#dedc20" transform="rotate(8 630 188)"/>
<text x="624" y="196" font-size="7" fill="#1030e0">x</text>
<!-- edge lines -->
<g class="l">
<path d="M205,332L301,250L309,213L317,205L357,222L367,163L375,158L401,170L469,110L471,105M761,105L1049,248L1257,348L1185,705"/>
<path d="M1257,348L1179,412L1169,452L1072,533L1077,498L1018,470M1179,412L1117,383L1103,380L1009,458L1013,470L1077,500M1113,423L1169,452M1113,423L1021,500M1111,388V425"/>
<path d="M936,518L791,635L796,645L859,678L857,705M934,523L796,640M934,567L819,660M942,522L1018,547L998,652L1036,668L1068,505L979,460M1018,547L1002,593L998,597L868,705M938,565L1000,595M942,530L1010,560M948,462L941,508M979,460L966,520M998,652L989,705M1036,668L993,705M887,433L948,462M878,457L925,482L923,497L966,520"/>
<path d="M1103,385V423"/><path d="M933,528V566M949,527V567M1012,470L1000,465"/>
<path d="M205,488L620,690L651,705"/>
<path d="M205,477L299,400M205,474L292,402M237,368L350,275M223,372L205,362M237,368Q228,375 223,372M309,213L370,243L380,248L351,273L301,250M380,248L357,222L416,250Q430,252 439,247L503,275L364,390L358,375Q335,372 319,382L269,425M470,246L462,227L451,248M467,215L462,227L523,258L503,275M523,258L509,372M503,275L491,362M367,163L467,215L455,250M375,158L467,210"/>
<path d="M469,113L518,135L455,188L437,190L401,170M533,105L548,110L518,135M520,130L548,110M512,135L530,105"/>
<path d="M516,243Q520,238 576,203M516,243L520,248L567,210M370,375L500,274M362,385L495,280"/>
<path d="M873,462L780,535M866,460L843,474L795,515"/>
</g>
<path d="M559,208Q568,202 576,203L612,212Q625,212 634,205L666,180Q685,172 701,175Q720,177 737,185L912,262L954,282Q975,300 969,308Q968,320 954,332L931,362L957,388L907,433" class="t"/>
<path d="M530,235L559,213Q568,208 576,208L612,218Q625,218 634,211L668,186Q685,178 699,180L740,191L912,268L948,289Q966,305 962,320L925,362L951,388L905,425" class="l"/>
<path d="M900,429L912,420M907,433L900,429" class="l"/>
<g class="l">
<path d="M761,110L709,163L692,168L666,180M765,112L711,165Q718,170 722,172L976,295L1047,248M1049,248L980,303L976,318L935,358L935,368"/>
<path d="M794,163L810,150L976,230L957,243L794,163M806,170L810,150M794,163L800,170"/><path d="M810,150L976,225" stroke-dasharray="2 1"/>
</g>
<g class="l">
<path d="M623,230L661,192M661,192L655,235M669,190L655,235L617,282M655,235Q668,265 697,282L738,187M697,285L643,352M718,290L880,370M879,375L836,443M905,365Q930,325 935,285M668,198Q700,186 735,205L930,300"/>
<path d="M735,338L737,355L794,382L813,375L820,352L813,328L763,307L751,313L735,338M729,340L732,358L792,388L818,380L824,355M732,338L735,356L793,385L815,378L822,353M751,328L745,352M752,325L806,348L792,378M795,350L790,376M806,350L806,380"/>
</g>
<g class="l">
<path d="M575,215L557,325M584,217L578,327M598,218L580,325M595,218L577,327M555,332L578,327M555,332L527,392M555,332Q552,375 601,395L805,492M558,335Q560,370 600,403L794,507M548,340Q548,395 588,410L790,511M599,410Q575,495 502,565M473,473L431,532"/>
</g>
<path d="M580,327Q576,370 610,393L805,497" class="t"/>
<path d="M431,532L555,592M350,472L373,483L371,503L431,532M503,275L364,390M523,258L575,215L623,230M643,352L836,443M862,450L756,538M900,365L938,388L886,435L879,457" class="l" style="stroke-width:1.100"/>
<path d="M632,480L683,503M706,483L718,490L713,517L750,540L725,563L714,603L701,610L683,600L670,600L651,612L580,585L572,590L555,592L632,480M637,487L683,506" class="l"/>
<path d="M620,688L714,607L720,602L748,553L802,507M628,693L718,613L760,570L810,510" class="t"/>
<path d="M628,693L620,688M864,450L802,507" class="l"/>
<path d="M333,463L343,400M350,472L362,400M330,390L306,420L320,440L333,463M323,447Q315,445 316,436M333,463Q320,455 316,436M373,483L371,503" class="l"/>
<circle cx="320" cy="422" r="4" fill="none" class="l"/>
<!-- triad -->
<g fill="none" stroke="#7df05a" stroke-width="1"><path d="M264,647L266,630M268,647L270,630M269,615L265,630L273,631ZM264,647L247,660M266,649L250,662M245,663L251,652L254,660ZM264,647L285,657M265,650L284,660M296,662L283,655L282,662Z"/></g>
<g fill="#7df05a" font-size="10"><text x="268" y="605">Z</text><text x="232" y="668">X</text><text x="302" y="668">Y</text></g>
<!-- UCS -->
<g fill="none" stroke="#1020f0" stroke-width="1"><path d="M658,383L662,365M658,365h8l-4,-6zM658,383L640,374L636,374L650,379M658,383L672,373M670,368L674,373L664,376M658,383L645,394M650,386L646,392L652,390M658,383L653,405"/></g>
<g font-size="10" fill="#1020f0"><text x="661" y="355">Z</text><text x="623" y="371">Y</text><text x="673" y="371">X</text><text x="648" y="417">Z</text><text x="659" y="401" font-size="9.500">UCSTM_1</text></g>
<g font-size="10" fill="#e01010"><text x="634" y="400">X</text><text x="662" y="394" font-size="8">UCSPL3</text></g>
<path d="M658,351h9" stroke="#e01010"/>
<!-- annotation -->
<g stroke="#ee2230" fill="none" stroke-linecap="round"><path d="M1000,199L731,398" stroke-width="4.500"/><path d="M727,373L731,399L774,403" stroke-width="4.500"/></g>
<g font-size="19" fill="#ee3333">
<text x="1003" y="155">精加工黄色的面</text>
<text x="1003" y="183">这个要求不能补面，补了空跑的刀</text>
<text x="1003" y="217">路多了</text>
</g>
</g>
<path d="M205,105V705" stroke="#888"/>

<!-- LEFT PANEL -->
<rect x="3" y="107" width="196" height="19" fill="#f0f0f0" stroke="#8a8a8a"/>
<text x="5" y="120" font-size="13" fill="#111">Features</text>
<path d="M174,110h5v5h-5zM173,115h7M176.500,115v5" fill="none" stroke="#000" stroke-width="1.200"/><path d="M188,111l7,7M195,111l-7,7" stroke="#000" stroke-width="1.600"/>
<rect x="3" y="128" width="196" height="554" fill="#fff"/>
<path d="M199,128V682H3" fill="none" stroke="#7a7a7a" stroke-width="1.500"/>
<path d="M3,128V682" stroke="#ccc"/>
<rect x="4" y="131" width="184" height="19" fill="#f0f0f0"/><path d="M188,131V150" stroke="#888" stroke-width="1.200"/><path d="M4,150.500H188" stroke="#ddd"/>
<text x="10" y="145" font-size="12" fill="#111">名称</text>
<rect x="62" y="151" width="124" height="19" fill="none" stroke="#111" stroke-dasharray="1 1"/>
<path d="M22,166V265H30M22,182H30M22,202H30M22,223H30M22,244H30M28,160H33" fill="none" stroke="#aaa"/>
<rect x="17" y="155" width="10" height="10" fill="#fff" stroke="#aaa"/><path d="M19,160H25M22,157V163" stroke="#000"/>
<g font-size="12" fill="#111"><text x="62" y="165">图素</text><text x="62" y="186">输入模型11_CAV-C...</text><text x="62" y="207">取消缝合12</text><text x="62" y="228">延伸13</text><text x="62" y="249">延伸14</text><text x="62" y="270">延伸15</text></g>
<g transform="translate(50,160)"><circle cx="-3" cy="-4" r="3" fill="#2da82d" stroke="#222"/><path d="M1,2L7,2L4,-4Z" fill="#f0e040" stroke="#222"/><rect x="-6" y="2" width="6" height="4" fill="#d0a0d0" stroke="#222"/></g>
<g transform="translate(50,182)"><path d="M-5,-7H2L5,-4V7H-5Z" fill="#ddd" stroke="#666"/><path d="M-8,-4h5M-6,-6l3,2l-3,2" stroke="#1a3fa0" fill="none"/><path d="M6,2H0l2,-2M0,2l2,2" stroke="#1020c0" stroke-width="1.400" fill="none"/></g>
<g transform="translate(50,202)"><path d="M-8,-7L0,-4V8L-8,4ZM8,-7L0,-4V8L8,4Z" fill="#eef" stroke="#10108a"/><path d="M-1,-3V7M1,-3V7" stroke="#10c040" stroke-dasharray="2 1"/></g>
<g transform="translate(50,223)"><path d="M-8,-5H8L3,2H-3Z" fill="#10c030" stroke="#000"/><path d="M-3,2H3L1,7H-1Z" fill="#aaa" stroke="#000"/></g>
<g transform="translate(50,244)"><path d="M-8,-5H8L3,2H-3Z" fill="#10c030" stroke="#000"/><path d="M-3,2H3L1,7H-1Z" fill="#aaa" stroke="#000"/></g>
<g transform="translate(50,265)"><path d="M-8,-5H8L3,2H-3Z" fill="#10c030" stroke="#000"/><path d="M-3,2H3L1,7H-1Z" fill="#aaa" stroke="#000"/></g>
<path d="M33,260V269H38M36,266l3,3l-3,3" fill="none" stroke="#10108a" stroke-width="2"/>
<!-- tabs -->
<path d="M2,682H50V705L2,706Z" fill="#f4f4f4"/><path d="M50,682V706H2" fill="none" stroke="#888"/>
<path d="M51,682H96V704H51Z" fill="#f0f0f0" stroke="#888"/><path d="M98,682H145V704H98Z" fill="#f0f0f0" stroke="#888"/>
<g font-size="13" fill="#111"><text x="14" y="699">特征</text><text x="62" y="699">集合</text><text x="104" y="699">M视图</text></g>

<!-- STATUS -->
<rect x="205" y="705" width="1133" height="3" fill="#f8f8f8"/>
<rect x="0" y="708" width="1340" height="20" fill="#f0f0f0"/>
<path d="M573,708V727M757,708V727M861,708V727M964,708V727M1069,708V727M1272,708V727M1339,708V727" stroke="#d8d8d8"/>
<path d="M573,727.500H1340" stroke="#e0e0e0"/>
<text x="1072" y="723" font-size="13" fill="#111" textLength="159" lengthAdjust="spacing">精加工黄色面 : NC-Standard</text>
<text x="1276" y="723" font-size="13" fill="#111" textLength="49" lengthAdjust="spacing">单位:mm</text>

<!-- TASKBAR -->
<rect y="728" width="1366" height="40" fill="url(#task)"/>
<rect y="728" width="1366" height="1" fill="#5d6f84"/>
<circle cx="27" cy="748" r="18" fill="url(#orb)" stroke="#1a3a55"/>
<g transform="translate(27,747)"><path d="M-9,-6Q-5,-9 -1,-7L-2,-1Q-6,-3 -10,-1Z" fill="#e8502a"/><path d="M1,-7Q5,-5 9,-7L8,-1Q4,1 0,-1Z" fill="#8cc63f"/><path d="M-10,1Q-6,-1 -2,1L-3,7Q-7,5 -11,7Z" fill="#3a9ae0"/><path d="M0,1Q4,3 8,1L7,7Q3,9 -1,7Z" fill="#f7c531"/></g>
<rect x="60" y="729" width="53" height="37" rx="3" fill="url(#tbtn)" stroke="#55697f"/>
<rect x="114" y="729" width="4" height="37" rx="1" fill="url(#tbtn)" stroke="#55697f"/>
<g transform="translate(87,747)"><path d="M-10,-1A10,9 0 1 1 9,5" fill="none" stroke="#2aa8e0" stroke-width="4"/><path d="M-10,1H10" stroke="#2aa8e0" stroke-width="3"/><path d="M-10,2A10,9 0 0 0 8,7" fill="none" stroke="#2aa8e0" stroke-width="4"/><path d="M-14,14Q-16,2 0,-10Q12,-18 15,-12" fill="none" stroke="#f0b020" stroke-width="2.500"/></g>
<g transform="translate(151,749)"><path d="M-16,-14H-2L1,-10H16V14H-16Z" fill="#f5e0a0" stroke="#c8a860"/><rect x="-11" y="-14" width="10" height="3" fill="#fff"/><rect x="-11" y="-15" width="4" height="2" fill="#20a040"/><rect x="-3" y="-12" width="3" height="2" fill="#c03020"/><rect x="4" y="-11" width="3" height="2" fill="#2090d0"/><path d="M-14,-6H16V14H-16Z" fill="#fbe8b0" stroke="#d0b070"/><path d="M-9,14V4H11V14H6V9H-4V14Z" fill="#5fb4d8" stroke="#3a8ab0"/></g>
<rect x="183" y="729" width="59" height="37" rx="3" fill="url(#btn)" stroke="#55697f"/>
<use href="#clogo" transform="translate(213,748)"/>
<!-- tray -->
<g transform="translate(1050,748)"><rect x="-7" y="-3" width="14" height="8" rx="1" fill="#ccc" stroke="#777"/><path d="M-5,-1h10M-5,1h10M-3,3h6" stroke="#888" stroke-width=".8"/><path d="M0,-3Q0,-6 4,-6" fill="none" stroke="#888"/></g>
<circle cx="1072" cy="746" r="7" fill="#1a2fb0" stroke="#c8d0e0" stroke-width="1.400"/><text x="1069" y="750" font-size="10" font-weight="bold" fill="#fff">?</text>
<path d="M1090,738h5v3h-5zM1092,741v2" fill="none" stroke="#fff"/><path d="M1091,751h7l-3.500,3z" fill="#fff"/>
<rect x="1108" y="741" width="16" height="16" fill="#1a3a80"/><path d="M1110,752h12" stroke="#000" stroke-width="4"/><circle cx="1116" cy="745" r="2" fill="#222"/>
<rect x="1132" y="741" width="16" height="16" rx="2" fill="#1070c0"/><path d="M1137,744h7v8h-3v-5h-4z" fill="#fff"/>
<circle cx="1164" cy="747" r="6" fill="#98c83a"/><rect x="1180" y="742" width="15" height="14" rx="3" fill="#c02030"/>
<rect x="1206" y="743" width="10" height="11" rx="1" fill="#eee" stroke="#444"/><path d="M1230,753h3v3h-3zM1234,750h3v6h-3zM1238,746h3v10h-3zM1242,743h2v13h-2z" fill="#f2f2f2"/><path d="M1254,749l6,-5v12z" fill="#ddd"/>
<text x="1298" y="745" font-size="13" fill="#f0f0f0">21:41</text>
<text x="1281" y="762" font-size="11" fill="#dfe6ee">2010/12/26</text>
<g font-weight="bold" fill="#fff" stroke="#e3181f" stroke-width="2.200" paint-order="stroke" font-size="14.500">
<text x="1146" y="760" font-size="15">三维网</text>
<text x="1199" y="760" textLength="148" lengthAdjust="spacing">www.3dportal.cn</text>
</g>
<rect x="1353" y="731" width="12" height="35" fill="#6f7f90" stroke="#9fb0c0" rx="1"/>
</svg>
</body></html>
